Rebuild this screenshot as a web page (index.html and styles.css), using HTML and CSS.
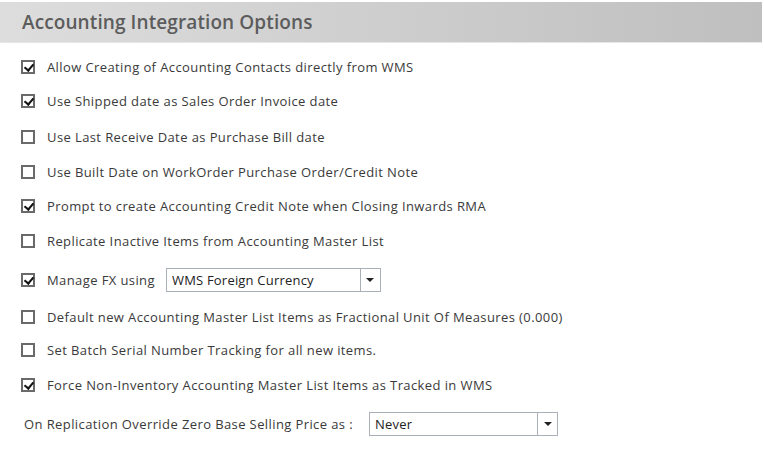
FILE: index.html
```html
<!DOCTYPE html>
<html>
<head>
<meta charset="utf-8">
<link rel="stylesheet" href="styles.css">
</head>
<body>
<div class="header"><span class="title">Accounting Integration Options</span></div>
<div class="options">
  <div class="row g14"><span class="cb on"></span><span class="lbl">Allow Creating of Accounting Contacts directly from WMS</span></div>
  <div class="row g14"><span class="cb on"></span><span class="lbl">Use Shipped date as Sales Order Invoice date</span></div>
  <div class="row g16"><span class="cb"></span><span class="lbl">Use Last Receive Date as Purchase Bill date</span></div>
  <div class="row g15"><span class="cb"></span><span class="lbl">Use Built Date on WorkOrder Purchase Order/Credit Note</span></div>
  <div class="row g14"><span class="cb on"></span><span class="lbl">Prompt to create Accounting Credit Note when Closing Inwards RMA</span></div>
  <div class="row g15"><span class="cb"></span><span class="lbl">Replicate Inactive Items from Accounting Master List</span></div>
  <div class="row tall g17"><span class="cb on"></span><span class="lbl">Manage FX using</span>
    <div class="select fx"><span class="val">WMS Foreign Currency</span><span class="btn"><span class="arrow"></span></span></div></div>
  <div class="row g15"><span class="cb"></span><span class="lbl">Default new Accounting Master List Items as Fractional Unit Of Measures (0.000)</span></div>
  <div class="row g13"><span class="cb"></span><span class="lbl">Set Batch Serial Number Tracking for all new items.</span></div>
  <div class="row g15"><span class="cb on"></span><span class="lbl">Force Non-Inventory Accounting Master List Items as Tracked in WMS</span></div>
  <div class="row tall g17 plain"><span class="lbl">On Replication Override Zero Base Selling Price as :</span>
    <div class="select never"><span class="val">Never</span><span class="btn"><span class="arrow"></span></span></div></div>
</div>
</body>
</html>
```
FILE: styles.css
```css
html, body { margin: 0; padding: 0; background: #fff; }
body { font-family: "Open Sans", "Noto Sans", sans-serif; color: #3a3a3a; width: 764px; height: 449px; overflow: hidden; }
.header {
  margin-top: 2px; width: 762px; height: 41px; box-sizing: border-box;
  background: linear-gradient(to right, #dddddd, #bfbfbf);
  border-bottom: 1px solid #e6e6e6;
  display: flex; align-items: center; padding-left: 22px;
}
.title { font-size: 19px; font-weight: 600; color: #5c5c5c; letter-spacing: 0.1px; }
.options { display: flex; flex-direction: column; padding-left: 21px; }
.row { display: flex; align-items: center; height: 20px; font-size: 13px; letter-spacing: 0.4px; }
.row.tall { height: 24px; }
.g13 { margin-top: 13px; } .g14 { margin-top: 14px; } .g15 { margin-top: 15px; }
.g16 { margin-top: 16px; } .g17 { margin-top: 17px; } .g19 { margin-top: 19px; }
.cb { width: 14px; height: 14px; box-sizing: border-box; border: 2px solid #6a6a6a; background: #fff; position: relative; flex: none; margin-right: 12px; }
.cb.on::after {
  content: ""; position: absolute; left: 3px; top: 0px; width: 4px; height: 7px;
  border-right: 2.5px solid #111; border-bottom: 2.5px solid #111; transform: rotate(40deg);
}
.plain .lbl { margin-left: 3px; }
.lbl { white-space: nowrap; }
.select { display: flex; height: 24px; box-sizing: border-box; border: 1px solid #a9b0b8; background: #fff; color: #222; }
.select .val { flex: 1; display: flex; align-items: center; padding-left: 5px; font-size: 13px; letter-spacing: 0.2px; }
.select .btn { width: 19px; border-left: 1px solid #a9b0b8; display: flex; align-items: center; justify-content: center; }
.arrow { width: 0; height: 0; border-left: 4px solid transparent; border-right: 4px solid transparent; border-top: 4px solid #222; }
.fx { width: 215px; margin-left: 11px; }
.never { width: 189px; margin-left: 16px; }
```
